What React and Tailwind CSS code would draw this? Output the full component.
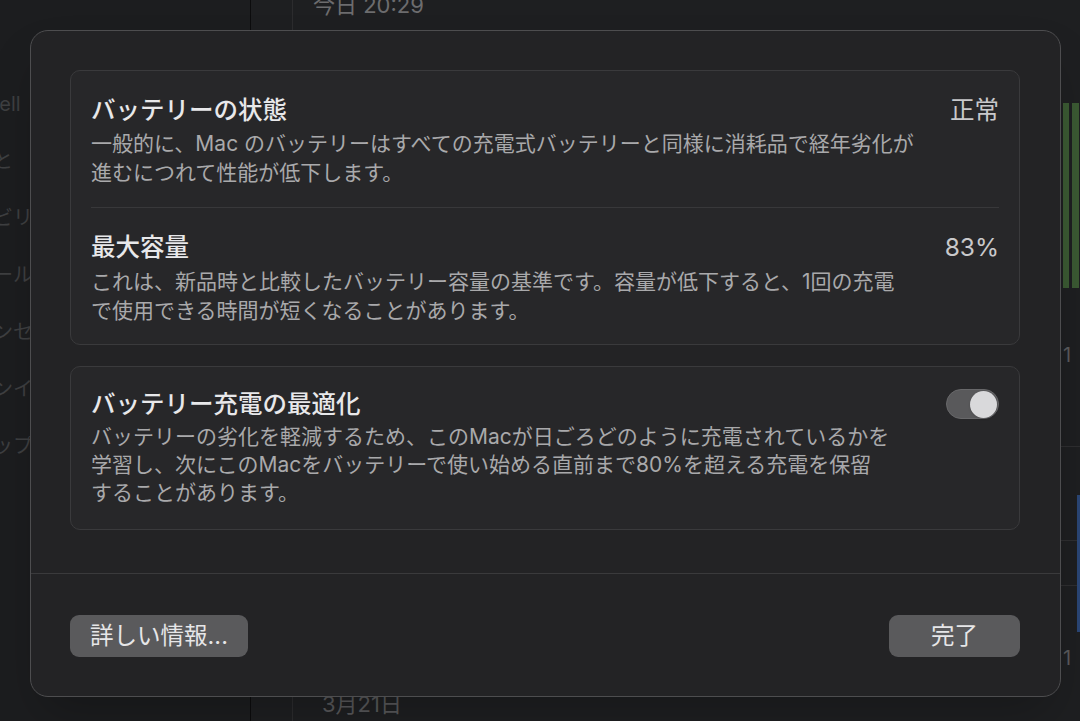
import React from 'react';

const sidebarRows = ['tell', 'と', 'ビリティ', 'ールセンター', 'ンセーバ', 'ンイ', 'ップ'];

function Section({ title, right, lines, leading = 'leading-[29px]', pt = 'pt-6', gap = 'mt-[4px]', pb = 'pb-[20px]' }) {
  return (
    <div className={`px-5 ${pt} ${pb}`}>
      <div className="flex items-start justify-between">
        <h2 className="text-[24.5px] leading-[30px] font-medium text-[#e8e8ea]">{title}</h2>
        {right}
      </div>
      <p className={`${gap} whitespace-nowrap text-[21px] ${leading} text-[#a9a9ab]`}>
        {lines.map((line, i) => (
          <span key={i} className="block">{line}</span>
        ))}
      </p>
    </div>
  );
}

function Value({ children }) {
  return <span className="text-[24.5px] leading-[30px] text-[#c9c9cb]">{children}</span>;
}

function Toggle() {
  return (
    <div className="flex h-[30px] w-[53px] items-center justify-end rounded-full border border-[#68686a] bg-[#59595b] pr-px">
      <div className="h-[27px] w-[27px] rounded-full bg-[#d9d9db] shadow-sm" />
    </div>
  );
}

export default function App() {
  return (
    <div className="relative h-[721px] w-[1080px] overflow-hidden bg-[#1e1f21] font-['Inter','Noto_Sans_CJK_JP',sans-serif]">
      {/* dimmed app behind the sheet */}
      <div className="flex h-full">
        <aside className="w-[251px] shrink-0 border-r border-[#0c0c0d] bg-[#1c1d1f] pt-[75px]">
          {sidebarRows.map((t) => (
            <div key={t} className="flex h-[57px] items-center whitespace-nowrap text-[20px] text-[#3e3f41]">
              <span className="-ml-[7px]">{t}</span>
            </div>
          ))}
        </aside>
        <div className="w-[42px] shrink-0 border-r border-[#2c2c2e]" />
        <main className="flex flex-1">
          <div className="flex flex-1 flex-col justify-between">
            <div className="-mt-[10px] pl-5 text-[22px] leading-[30px] text-[#6c6c6e]">今日 20:29</div>
            <div className="mb-[2px] pl-[29px] text-[22px] leading-[30px] text-[#58585a]">3月21日</div>
          </div>
          <div className="flex w-[20px] flex-col">
            <div className="h-[103px]" />
            <div className="flex h-[185px] gap-[3px] pl-[3px]">
              <div className="w-[6px] bg-[#3b5a33]" />
              <div className="w-[7px] bg-[#3b5a33]" />
            </div>
            <div className="mt-[55px] pl-[3px] text-[20px] leading-[24px] text-[#5a5a5c]">1</div>
            <div className="mt-[79px] border-t border-[#2e2e30]" />
            <div className="h-[48px]" />
            <div className="flex h-[137px]">
              <div className="flex flex-1 flex-col">
                <div className="h-[45px]" />
                <div className="h-[45px] border-t border-[#2e2e30]" />
                <div className="border-t border-[#2e2e30]" />
              </div>
              <div className="w-[3px] bg-[#2b4676]" />
            </div>
            <div className="mt-[16px] pl-[3px] text-[20px] leading-[20px] text-[#5a5a5c]">1</div>
          </div>
        </main>
      </div>

      {/* sheet */}
      <div className="absolute left-[30px] top-[30px] flex h-[667px] w-[1031px] flex-col rounded-[18px] border border-[#4d4d4f] bg-[#232325] shadow-2xl">
        <div className="pl-[39px] pr-[40px] pt-[39px]">
          <div className="rounded-[10px] border border-[#3a3a3c] bg-[#272729]">
            <Section
              title="バッテリーの状態"
              right={<Value>正常</Value>}
              lines={[
                '一般的に、Mac のバッテリーはすべての充電式バッテリーと同様に消耗品で経年劣化が',
                '進むにつれて性能が低下します。',
              ]}
            />
            <div className="mx-5 h-px bg-[#38383a]" />
            <Section
              title="最大容量"
              right={<Value>83%</Value>}
              gap="mt-[5px]"
              pb="pb-[19px]"
              lines={[
                'これは、新品時と比較したバッテリー容量の基準です。容量が低下すると、1回の充電',
                'で使用できる時間が短くなることがあります。',
              ]}
            />
          </div>

          <div className="mt-[21px] rounded-[10px] border border-[#3a3a3c] bg-[#272729]">
            <Section
              title="バッテリー充電の最適化"
              right={<Toggle />}
              leading="leading-[28px]"
              pt="pt-[22px]"
              gap="mt-[4px]"
              pb="pb-[22px]"
              lines={[
                'バッテリーの劣化を軽減するため、このMacが日ごろどのように充電されているかを',
                '学習し、次にこのMacをバッテリーで使い始める直前まで80%を超える充電を保留',
                'することがあります。',
              ]}
            />
          </div>
        </div>

        <div className="mt-[43px] h-px bg-[#3a3a3c]" />

        <div className="flex items-start justify-between pl-[39px] pr-[40px] pt-[41px]">
          <button className="flex h-[42px] w-[178px] items-center justify-center rounded-[9px] bg-[#5a5a5c] text-[23.5px] text-[#e6e6e8]">
            詳しい情報...
          </button>
          <button className="flex h-[42px] w-[131px] items-center justify-center rounded-[9px] bg-[#5a5a5c] text-[23.5px] text-[#e6e6e8]">
            完了
          </button>
        </div>
      </div>
    </div>
  );
}
